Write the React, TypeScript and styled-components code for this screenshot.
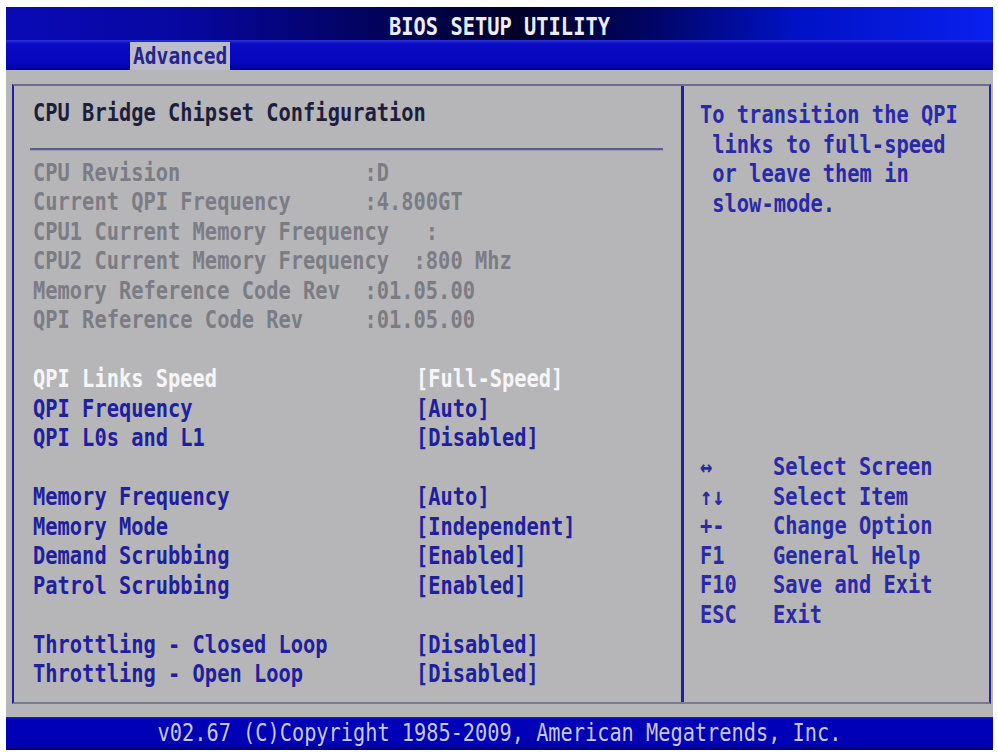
import React from 'react';
import styled, { createGlobalStyle, css } from 'styled-components';

const GlobalStyle = createGlobalStyle`
  html, body {
    margin: 0;
    padding: 0;
    background: #ffffff;
  }
  body {
    width: 998px;
    height: 756px;
    overflow: hidden;
  }
`;

// text-mode font is tall and narrow, stretch a mono face to get there
const tall = css`
  transform: scaleY(1.2);
  transform-origin: 50% 50%;
`;

const Screen = styled.div`
  margin: 7px 5px 0 6px;
  width: 987px;
  height: 743px;
  display: flex;
  flex-direction: column;
  font-family: 'DejaVu Sans Mono', 'Liberation Mono', monospace;
  font-weight: bold;
  font-size: 20.4px;
  line-height: 29.5px;
`;

const TitleBar = styled.div`
  height: 33px;
  padding-top: 8px;
  box-sizing: border-box;
  display: flex;
  justify-content: center;
  align-items: center;
  color: #ececf4;
  background: linear-gradient(
    90deg,
    #0a0ab6 0%,
    #0707a0 18%,
    #02025a 38%,
    #000028 52%,
    #00045c 64%,
    #0012c4 80%,
    #0a20ee 100%
  );
`;

const TitleText = styled.span`
  display: inline-block;
  ${tall};
`;

const TabBar = styled.div`
  height: 30px;
  display: flex;
  align-items: flex-end;
  padding-left: 124px;
  background: linear-gradient(180deg, #2a34d8 0px, #0a0ac4 4px, #0606bc 24px, #000090 30px);
`;

const Tab = styled.div`
  height: 28px;
  padding: 0 3px;
  display: flex;
  align-items: center;
  background: #bcbcca;
  color: #24248c;
  font-size: 19.6px;

  span {
    display: inline-block;
    padding-top: 2px;
    ${tall};
  }
`;

const Body = styled.div`
  flex: 1;
  background: #b6b6b8;
  padding: 14px 2px 13px 6px;
  display: flex;
`;

const Frame = styled.div`
  flex: 1;
  display: grid;
  grid-template-columns: 667px 1fr;
  border-left: 2px solid #2020a0;
  border-right: 2px solid #2424a4;
  border-top: 2px solid #6c6c8c;
  border-bottom: 2px solid #7a7a92;
`;

const MainPanel = styled.div`
  padding: 13px 19px 0 19px;
`;

const HelpPanel = styled.div`
  border-left: 3px solid #2020a2;
  padding: 15px 0 0 16px;
  color: #2a2aa8;
`;

type Tone = 'heading' | 'info' | 'active' | 'option';

const toneColor: Record<Tone, string> = {
  heading: '#1e1e3c',
  info: '#7c7c84',
  active: '#f6f6f8',
  option: '#20209e',
};

const Line = styled.div<{ $tone?: Tone }>`
  height: 29.5px;
  white-space: pre;
  color: ${(p) => (p.$tone ? toneColor[p.$tone] : 'inherit')};
  ${tall};
`;

const Separator = styled.div`
  height: 2px;
  margin: 19px -1px 9px -3px;
  background: #5c5c94;
  box-shadow: 0 1px 0 #9a9ab0;
`;

const Gap = styled.div<{ $rows?: number }>`
  height: ${(p) => (p.$rows ?? 1) * 29.5}px;
`;

const SettingRow = styled.div<{ $active?: boolean }>`
  height: 29.5px;
  display: grid;
  grid-template-columns: 383px 1fr;
  white-space: pre;
  color: ${(p) => (p.$active ? toneColor.active : toneColor.option)};
  ${tall};
`;

const KeyList = styled.div`
  margin-top: 234px;
`;

const KeyRow = styled.div`
  height: 29.5px;
  display: grid;
  grid-template-columns: 73px 1fr;
  white-space: pre;
  ${tall};
`;

const Footer = styled.div`
  height: 33px;
  display: flex;
  justify-content: center;
  align-items: center;
  color: #c8c8dc;
  font-weight: normal;
  font-size: 20.3px;
  background: linear-gradient(180deg, #1a1ad0 0px, #0000b8 3px, #0000b4 28px, #00006a 33px);

  span {
    display: inline-block;
    ${tall};
  }
`;

const infoLines = [
  'CPU Revision               :D',
  'Current QPI Frequency      :4.800GT',
  'CPU1 Current Memory Frequency   :',
  'CPU2 Current Memory Frequency  :800 Mhz',
  'Memory Reference Code Rev  :01.05.00',
  'QPI Reference Code Rev     :01.05.00',
];

type Setting = { label: string; value: string; active?: boolean };

const settingGroups: Setting[][] = [
  [
    { label: 'QPI Links Speed', value: '[Full-Speed]', active: true },
    { label: 'QPI Frequency', value: '[Auto]' },
    { label: 'QPI L0s and L1', value: '[Disabled]' },
  ],
  [
    { label: 'Memory Frequency', value: '[Auto]' },
    { label: 'Memory Mode', value: '[Independent]' },
    { label: 'Demand Scrubbing', value: '[Enabled]' },
    { label: 'Patrol Scrubbing', value: '[Enabled]' },
  ],
  [
    { label: 'Throttling - Closed Loop', value: '[Disabled]' },
    { label: 'Throttling - Open Loop', value: '[Disabled]' },
  ],
];

const helpText = ['To transition the QPI', ' links to full-speed', ' or leave them in', ' slow-mode.'];

const keys = [
  { key: '\u2194', action: 'Select Screen' },
  { key: '\u2191\u2193', action: 'Select Item' },
  { key: '+-', action: 'Change Option' },
  { key: 'F1', action: 'General Help' },
  { key: 'F10', action: 'Save and Exit' },
  { key: 'ESC', action: 'Exit' },
];

export default function App() {
  return (
    <>
      <GlobalStyle />
      <Screen>
        <TitleBar>
          <TitleText>BIOS SETUP UTILITY</TitleText>
        </TitleBar>
        <TabBar>
          <Tab>
            <span>Advanced</span>
          </Tab>
        </TabBar>

        <Body>
          <Frame>
            <MainPanel>
              <Line $tone="heading">CPU Bridge Chipset Configuration</Line>
              <Separator />
              {infoLines.map((text) => (
                <Line key={text} $tone="info">
                  {text}
                </Line>
              ))}
              {settingGroups.map((group, i) => (
                <React.Fragment key={i}>
                  <Gap />
                  {group.map((s) => (
                    <SettingRow key={s.label} $active={s.active}>
                      <span>{s.label}</span>
                      <span>{s.value}</span>
                    </SettingRow>
                  ))}
                </React.Fragment>
              ))}
            </MainPanel>

            <HelpPanel>
              {helpText.map((text) => (
                <Line key={text}>{text}</Line>
              ))}
              <KeyList>
                {keys.map((k) => (
                  <KeyRow key={k.action}>
                    <span>{k.key}</span>
                    <span>{k.action}</span>
                  </KeyRow>
                ))}
              </KeyList>
            </HelpPanel>
          </Frame>
        </Body>

        <Footer>
          <span>v02.67 (C)Copyright 1985-2009, American Megatrends, Inc.</span>
        </Footer>
      </Screen>
    </>
  );
}
